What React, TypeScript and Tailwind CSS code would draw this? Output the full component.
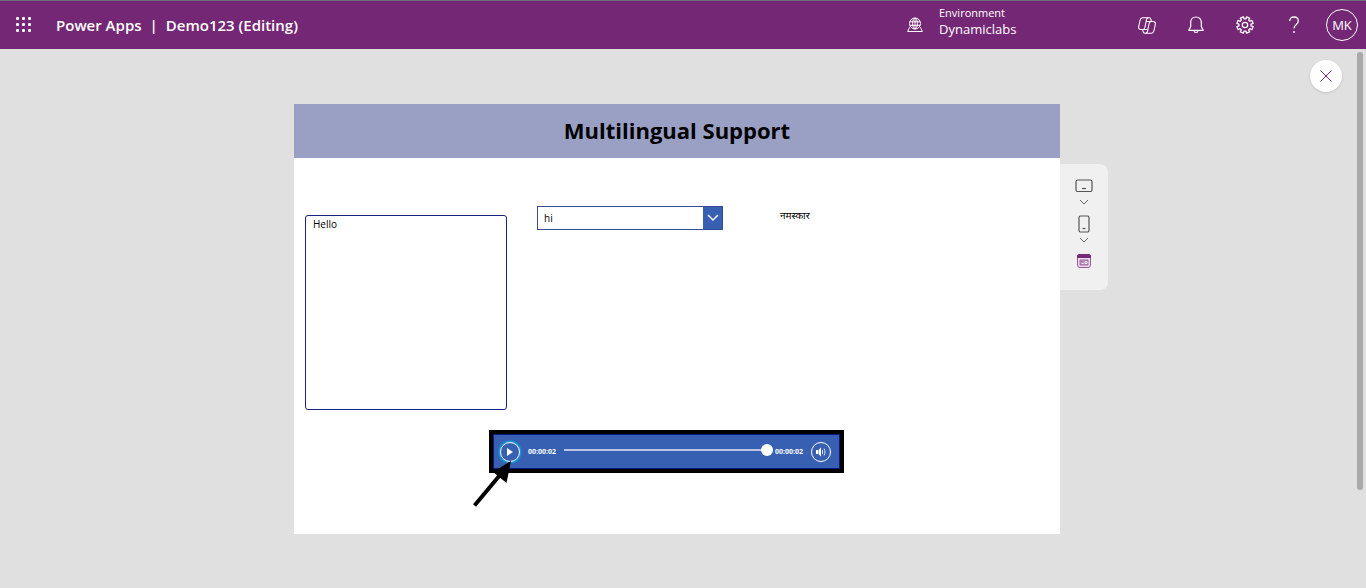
import { ReactNode, useState } from "react";

const LANGUAGES = ["hi", "en", "fr", "de", "es"];

// 8-tooth cog outline around (8, 8)
const gearPoints = Array.from({ length: 8 }, (_, i) => {
  const corners = [
    [7.4, -12],
    [7.4, 12],
    [5.4, 14],
    [5.4, 31],
  ];
  return corners
    .map(([r, deg]) => {
      const a = ((i * 45 + 22.5 + deg) * Math.PI) / 180;
      return `${(8 + r * Math.cos(a)).toFixed(2)},${(8 + r * Math.sin(a)).toFixed(2)}`;
    })
    .join(" ");
}).join(" ");

const HeaderButton = ({ label, children }: { label: string; children: ReactNode }) => (
  <button aria-label={label} className="flex h-12 w-12 items-center justify-center hover:bg-white/10">
    {children}
  </button>
);

const EnvironmentIcon = () => (
  <svg width="16" height="16" viewBox="0 0 16 16" fill="none" stroke="currentColor" aria-hidden="true">
    <circle cx="8" cy="6.5" r="5.5" />
    <ellipse cx="8" cy="6.5" rx="2.4" ry="5.5" />
    <path d="M2.8 4.8h10.4M2.8 8.3h10.4M8 1v11" />
    <path d="M2.6 10.2L.7 14.5h14.6l-1.9-4.3" />
  </svg>
);

const CopilotIcon = () => (
  <svg width="18" height="17" viewBox="0 0 18 17" fill="none" stroke="currentColor" strokeWidth="1.1" strokeLinejoin="round" aria-hidden="true">
    <path d="M4.800.8h6.400c1 0 1.500.5 1.700 1.500l.5 2.200h1.800c1.700 0 2.500 1.200 2.100 3l-1.300 6c-.4 1.800-1.300 2.700-2.800 2.700H6.800c-1 0-1.500-.5-1.700-1.500l-.5-2.200H2.800c-1.700 0-2.500-1.200-2.100-3l1.300-6C2.400 1.700 3.300.8 4.800.8z" />
    <path d="M10.500.8C9.400.8 8.800 1.400 8.500 2.700L6.900 10.500c-.3 1.400-.9 2-2.200 2" />
    <path d="M7.500 16.200c1.100 0 1.700-.6 2-1.900l1.600-7.800c.3-1.400.9-2 2.200-2" />
    <path d="M8.200 4.500h5M4.800 12.500h5" />
  </svg>
);

const BellIcon = () => (
  <svg width="18" height="18" viewBox="0 0 18 18" fill="none" stroke="currentColor" strokeWidth="1.2" strokeLinejoin="round" aria-hidden="true">
    <path d="M9 1C5.900 1 3.700 3.300 3.700 6.300v4.200L1.800 14.300h14.400l-1.900-3.800V6.300C14.300 3.300 12.100 1 9 1z" />
    <path d="M6.900 14.500c.1 1.300 1 2 2.100 2s2-.7 2.100-2" />
  </svg>
);

const GearIcon = () => (
  <svg width="18" height="18" viewBox="0 0 16 16" fill="none" stroke="currentColor" strokeWidth="1.1" strokeLinejoin="round" aria-hidden="true">
    <polygon points={gearPoints} />
    <circle cx="8" cy="8" r="2.4" />
  </svg>
);

const HelpIcon = () => (
  <svg width="12" height="18" viewBox="0 0 12 18" fill="none" stroke="currentColor" strokeWidth="1.3" aria-hidden="true">
    <path d="M1.700 5C1.700 2.600 3.500 1 6 1s4.300 1.500 4.300 3.900c0 1.800-.9 2.700-2.200 3.800C6.700 9.800 6 10.600 6 12.500" />
    <circle cx="6" cy="16" r=".9" fill="currentColor" stroke="none" />
  </svg>
);

const ChevronIcon = () => (
  <svg width="10" height="6" viewBox="0 0 10 6" fill="none" stroke="#666" aria-hidden="true">
    <path d="M1 1l4 4 4-4" />
  </svg>
);

const Header = () => (
  <header className="flex h-[49px] items-center border-t border-[#6b6f7d] bg-[#742774] text-white">
    <button aria-label="App launcher" className="flex h-12 w-12 items-center justify-center pr-0.5 pb-0.5">
      <span className="grid grid-cols-3 gap-[3px]">
        {Array.from({ length: 9 }, (_, i) => (
          <span key={i} className="size-[3px] rounded-[1px] bg-white" />
        ))}
      </span>
    </button>
    <div className="ml-2 flex flex-1 items-center gap-2 text-[15px] font-semibold whitespace-nowrap">
      <a href="#home">Power Apps</a>
      <span>|</span>
      <span>Demo123 (Editing)</span>
    </div>
    <button className="flex w-[216px] items-center gap-4 text-left">
      <EnvironmentIcon />
      <span className="flex flex-col pb-2">
        <span className="text-[11px] leading-4">Environment</span>
        <span className="text-[13px] leading-4">Dynamiclabs</span>
      </span>
    </button>
    <div className="flex items-center gap-px">
      <HeaderButton label="Copilot">
        <CopilotIcon />
      </HeaderButton>
      <HeaderButton label="Notifications">
        <BellIcon />
      </HeaderButton>
      <HeaderButton label="Settings">
        <GearIcon />
      </HeaderButton>
      <HeaderButton label="Help">
        <HelpIcon />
      </HeaderButton>
    </div>
    <button aria-label="Account" className="mx-2 size-8 rounded-full border border-white pt-0.5 text-[13px]">
      MK
    </button>
  </header>
);

const DevicePanel = () => (
  <div className="mt-[60px] flex h-[126px] w-12 flex-col items-center rounded-r-lg bg-[#f0f0f0] pt-[15px]">
    <button aria-label="Tablet size" className="flex">
      <svg width="18" height="14" viewBox="0 0 18 14" fill="none" stroke="#555" strokeWidth="1.2" aria-hidden="true">
        <rect x="1" y="1" width="16" height="11.5" rx="1.5" />
        <path d="M7 9.500h4" />
      </svg>
    </button>
    <button aria-label="Tablet options" className="mt-1.5 flex">
      <ChevronIcon />
    </button>
    <button aria-label="Phone size" className="mt-2.5 flex">
      <svg width="12" height="18" viewBox="0 0 12 18" fill="none" stroke="#555" strokeWidth="1.2" aria-hidden="true">
        <rect x="1" y="1" width="10" height="16" rx="1.5" />
        <path d="M4.500 13.500h3" />
      </svg>
    </button>
    <button aria-label="Phone options" className="mt-1 flex">
      <ChevronIcon />
    </button>
    <button aria-label="Browser size" className="mt-2.5 flex">
      <svg width="16" height="16" viewBox="0 0 16 16" fill="none" aria-hidden="true">
        <rect x="1.5" y="1.5" width="13" height="13" rx="2.5" fill="#ead9ea" stroke="#9b5c9b" />
        <path d="M1 5V3.500A2.500 2.500 0 0 1 3.500 1h9A2.500 2.500 0 0 1 15 3.500V5z" fill="#742774" />
        <path d="M4 7h8v5H4z" fill="#b78bb7" stroke="#a56ca5" />
        <path d="M5.500 10.500h2M9 8.500h2v2H9z" stroke="#f3e8f3" />
      </svg>
    </button>
  </div>
);

const AudioPlayer = () => {
  const [position, setPosition] = useState(100);

  return (
    <div className="relative mt-5 ml-[195px] w-[355px] border-4 border-black">
      <div className="flex h-[35px] items-center border border-[#0b1a80] bg-[#3860b2] pr-2 pl-1.5 text-white">
        <button
          aria-label="Play"
          className="flex size-5 items-center justify-center rounded-full border border-white shadow-[0_0_2px_1px_#00b4f0]"
        >
          <svg width="6" height="8" viewBox="0 0 6 8" fill="currentColor" aria-hidden="true">
            <path d="M0 0l6 4-6 4z" />
          </svg>
        </button>
        <span className="ml-2 pt-0.5 text-[7px] font-bold">00:00:02</span>
        <input
          type="range"
          aria-label="Seek"
          value={position}
          onChange={(e) => setPosition(Number(e.target.value))}
          className="mr-0.5 mb-1 ml-2 h-3 min-w-0 flex-1 appearance-none bg-transparent [&::-webkit-slider-runnable-track]:h-0.5 [&::-webkit-slider-runnable-track]:bg-[#b9c6e6] [&::-webkit-slider-thumb]:-mt-[5px] [&::-webkit-slider-thumb]:size-3 [&::-webkit-slider-thumb]:appearance-none [&::-webkit-slider-thumb]:rounded-full [&::-webkit-slider-thumb]:bg-white"
        />
        <span className="pt-0.5 text-[7px] font-bold">00:00:02</span>
        <button
          aria-label="Volume"
          className="ml-2 flex size-5 items-center justify-center rounded-full border border-white"
        >
          <svg width="10" height="10" viewBox="0 0 10 10" fill="currentColor" aria-hidden="true">
            <path d="M0 3h2v4H0zM2.500 3L5 .5v9L2.500 7z" />
            <path d="M6.500 3v4M8 1.500c1.300 2 1.300 5 0 7" fill="none" stroke="currentColor" strokeWidth=".8" />
          </svg>
        </button>
      </div>
      {/* pointer to the play button */}
      <svg
        className="pointer-events-none absolute top-[26px] -left-5 z-10"
        width="42"
        height="48"
        viewBox="0 0 42 48"
        aria-hidden="true"
      >
        <path d="M1.500 45.500L27 15" stroke="#000" strokeWidth="4" />
        <path d="M38 1L20 12l13.500 11z" />
      </svg>
    </div>
  );
};

const AppCanvas = () => {
  const [text, setText] = useState("Hello");
  const [language, setLanguage] = useState("hi");

  return (
    <section className="bg-white pb-[61px] text-black">
      <h1 className="flex h-[54px] items-center justify-center bg-[#9a9fc4] pb-0.5 text-[22px] font-bold">
        Multilingual Support
      </h1>
      <div className="mt-12 flex items-start pl-[11px] text-[10px]">
        <textarea
          aria-label="Text to translate"
          value={text}
          onChange={(e) => setText(e.target.value)}
          className="mt-[9px] h-[195px] w-[202px] resize-none rounded-[3px] border border-[#1a237e] px-[7px] py-0.5 leading-3"
        />
        <div className="relative ml-[30px] w-[186px]">
          <select
            aria-label="Language"
            value={language}
            onChange={(e) => setLanguage(e.target.value)}
            className="h-6 w-full appearance-none border border-[#3b4a94] bg-white px-1.5"
          >
            {LANGUAGES.map((code) => (
              <option key={code}>{code}</option>
            ))}
          </select>
          <span className="pointer-events-none absolute inset-y-px right-px flex w-[19px] items-center justify-center bg-[#3860b2]">
            <svg width="12" height="8" viewBox="0 0 12 8" fill="none" stroke="#fff" strokeWidth="1.5" aria-hidden="true">
              <path d="M1 1l5 5 5-5" />
            </svg>
          </span>
        </div>
        <p className="ml-[57px] pt-px leading-4">नमस्कार</p>
      </div>
      <AudioPlayer />
    </section>
  );
};

export default function App() {
  return (
    <div className="flex min-h-screen flex-col bg-[#e0e0e0] font-['Segoe_UI','Open_Sans','Noto_Sans',sans-serif]">
      <Header />
      <div className="flex flex-1">
        <main className="min-w-0 flex-1">
          <div className="flex justify-end pt-[11px] pr-3">
            <button
              aria-label="Close preview"
              className="flex size-8 items-center justify-center rounded-full bg-white shadow-sm"
            >
              <svg width="12" height="12" viewBox="0 0 12 12" fill="none" stroke="#742774" aria-hidden="true">
                <path d="M.5.5l11 11M11.500.5l-11 11" />
              </svg>
            </button>
          </div>
          <div className="mt-3 grid grid-cols-[1fr_minmax(0,766px)_1fr] items-start">
            <div />
            <AppCanvas />
            <DevicePanel />
          </div>
        </main>
        <div className="w-3 pt-[3px] pl-[3px]">
          <div className="h-[438px] w-1.5 rounded-full bg-[#a9a9a9]" />
        </div>
      </div>
    </div>
  );
}
